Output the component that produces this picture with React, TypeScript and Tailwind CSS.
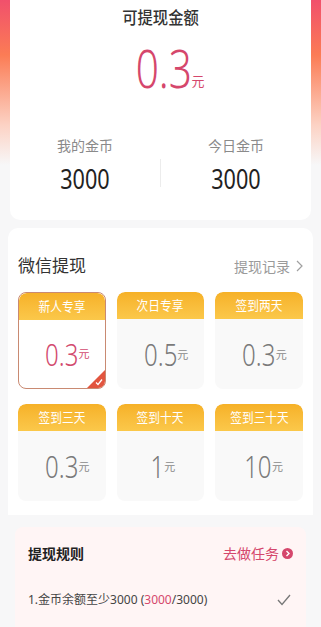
import React from "react"

const font = { fontFamily: '"Noto Sans", "Noto Sans CJK SC", sans-serif' }

const options = [
  { label: "新人专享", value: "0.3", selected: true },
  { label: "次日专享", value: "0.5" },
  { label: "签到两天", value: "0.3" },
  { label: "签到三天", value: "0.3" },
  { label: "签到十天", value: "1" },
  { label: "签到三十天", value: "10" },
]

function OptionCard({ label, value, selected }: { label: string; value: string; selected?: boolean }) {
  return (
    <div
      className={`relative h-[97px] rounded-[8px] overflow-hidden flex flex-col ${
        selected ? "border-[1.5px] border-[#c98a72] bg-white" : "bg-[#f9f9f9]"
      }`}
    >
      <div className="h-[27px] shrink-0 flex items-center justify-center bg-gradient-to-b from-[#f6b127] to-[#fbc84a] text-white text-[13px] rounded-t-[8px]">
        <span className="inline-block scale-x-90">{label}</span>
      </div>
      <div className="flex-1 flex items-center justify-center">
        <span
          className={`inline-block scale-x-75 origin-right text-[32px] font-light leading-none ${
            selected ? "text-[#d24a6e]" : "text-[#7a7a7a]"
          }`}
        >
          {value}
        </span>
        <span className={`text-[11px] self-end mb-[26px] ${selected ? "text-[#d24a6e]" : "text-[#8a8a8a]"}`}>元</span>
      </div>
      {selected && (
        <div className="absolute right-0 bottom-0 w-0 h-0 border-l-[18px] border-l-transparent border-b-[18px] border-b-[#e2553f]">
          <svg className="absolute -left-[10px] top-[8px]" width="8" height="8" viewBox="0 0 8 8">
            <path d="M1 4.5 L3 6.5 L7 1.5" stroke="white" strokeWidth="1.3" fill="none" />
          </svg>
        </div>
      )}
    </div>
  )
}

export default function App() {
  return (
    <div style={font} className="w-[321px] min-h-[627px] bg-[#f7f7f8] overflow-hidden">
      <div className="px-[10px] pb-[8px] bg-[linear-gradient(to_bottom,#f1506c_0px,#fb7c55_55px,#fcd2c4_125px,#f7f7f8_165px)]">
        <div className="h-[220px] bg-white rounded-b-[10px] flex flex-col items-center">
          <div className="mt-[6px] text-[17px] leading-[24px] text-[#333] font-medium">
            <span className="inline-block scale-x-90">可提现金额</span>
          </div>
          <div className="mt-[14px] flex items-end text-[#d5476c]">
            <span className="inline-block scale-x-75 origin-right text-[54px] font-light leading-[46px]">0.3</span>
            <span className="text-[13px] leading-none mb-[2px]">元</span>
          </div>
          <div className="mt-[46px] w-full flex items-center">
            <div className="flex-1 flex flex-col items-center">
              <span className="text-[14px] leading-[20px] text-[#8a8a8a]">我的金币</span>
              <span className="inline-block scale-x-80 mt-[8px] text-[27px] leading-[30px] text-[#222]">3000</span>
            </div>
            <div className="w-px h-[28px] mt-[16px] bg-[#ececec]" />
            <div className="flex-1 flex flex-col items-center">
              <span className="text-[14px] leading-[20px] text-[#8a8a8a]">今日金币</span>
              <span className="inline-block scale-x-80 mt-[8px] text-[27px] leading-[30px] text-[#222]">3000</span>
            </div>
          </div>
        </div>
      </div>

      <div className="mx-[8px] bg-white rounded-t-[10px] px-[10px] pb-[14px]">
        <div className="h-[74px] flex items-center justify-between pt-[2px]">
          <span className="text-[17px] text-[#333]">微信提现</span>
          <span className="text-[14px] text-[#9a9a9a] flex items-center gap-[6px]">
            提现记录
            <svg width="7" height="12" viewBox="0 0 7 12">
              <path d="M1 1 L6 6 L1 11" stroke="#a0a0a0" strokeWidth="1.2" fill="none" />
            </svg>
          </span>
        </div>
        <div className="grid grid-cols-3 gap-x-[11px] gap-y-[15px] -mt-[10px]">
          {options.map((o) => (
            <OptionCard key={o.label} {...o} />
          ))}
        </div>
      </div>

      <div className="mx-[15px] mt-[12px] bg-[#fff5f5] rounded-t-[8px] px-[13px] pt-[16px] pb-[20px]">
        <div className="flex items-center justify-between">
          <span className="text-[14px] font-bold text-[#222]">提现规则</span>
          <span className="flex items-center gap-[3px] text-[14px] text-[#d5476c]">
            去做任务
            <svg width="11" height="11" viewBox="0 0 11 11">
              <circle cx="5.5" cy="5.5" r="5.5" fill="#d5476c" />
              <path d="M4.5 3 L7 5.5 L4.5 8" stroke="white" strokeWidth="1.4" fill="none" />
            </svg>
          </span>
        </div>
        <div className="mt-[27px] flex items-center justify-between">
          <span className="text-[12px] text-[#444]">
            1.金币余额至少3000 (<span className="text-[#d5476c]">3000</span>/3000)
          </span>
          <svg width="14" height="12" viewBox="0 0 14 12" className="mr-[2px]">
            <path d="M1 6 L5 10.5 L13 1" stroke="#777" strokeWidth="1.3" fill="none" />
          </svg>
        </div>
      </div>
    </div>
  )
}
